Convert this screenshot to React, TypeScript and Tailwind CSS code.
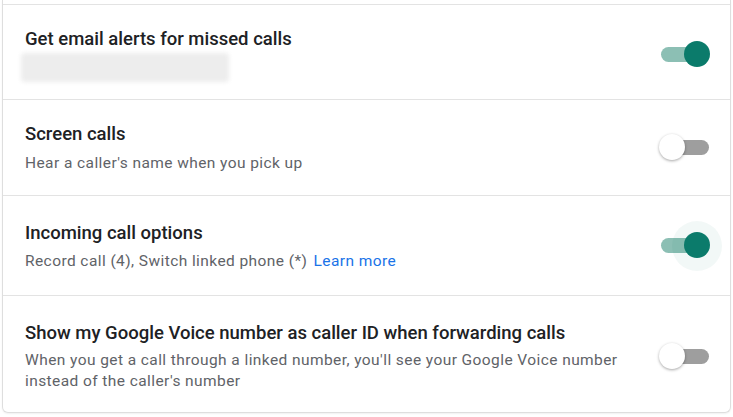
import type { ReactNode } from 'react';

function Toggle({ on, halo }: { on: boolean; halo?: boolean }) {
  return (
    <div className="relative ml-auto h-[15px] w-[48px] shrink-0">
      <div className={`h-full w-full rounded-full ${on ? 'bg-[#8cbfb4]' : 'bg-[#9e9e9e]'}`} />
      {halo && (
        <div className="absolute left-[11px] top-[-17px] h-[50px] w-[50px] rounded-full bg-[#00796b]/[0.05]" />
      )}
      <div
        className={`absolute top-[-6px] h-[26px] w-[26px] rounded-full ${
          on
            ? 'left-[23px] bg-[#0b7b6b]'
            : 'left-[-2px] bg-white shadow-[0_1px_3px_rgba(0,0,0,0.35)]'
        }`}
      />
    </div>
  );
}

function Row({
  title,
  on,
  halo,
  children,
  className,
}: {
  title: string;
  on: boolean;
  halo?: boolean;
  children: ReactNode;
  className: string;
}) {
  return (
    <div className={`flex items-center border-t border-[#e3e3e3] pl-[22px] pr-[21px] ${className}`}>
      <div className="max-w-[615px]">
        <div className="text-[18.5px] font-medium leading-6 text-[#202124]">{title}</div>
        {children}
      </div>
      <Toggle on={on} halo={halo} />
    </div>
  );
}

const sub = 'text-[15.5px] tracking-[0.42px] text-[#5f6368]';

export default function App() {
  return (
    <div className="h-[417px] w-[733px] overflow-hidden bg-white px-[2px] font-['Roboto',sans-serif]">
      <div className="rounded-b-md border-x border-b border-[#dedede] shadow-[0_1px_2px_rgba(0,0,0,0.06)]">
        <div className="h-[4px]" />
        <Row title="Get email alerts for missed calls" on className="h-[95px] pt-[5px]">
          <div className="mt-[2px] h-[29px] w-[208px] -translate-x-[4px] rounded-sm bg-[#ededed] blur-[2px]" />
        </Row>
        <Row title="Screen calls" on={false} className="h-[96px]">
          <div className={`mt-[7px] leading-5 ${sub}`}>Hear a caller's name when you pick up</div>
        </Row>
        <Row title="Incoming call options" on halo className="h-[100px]">
          <div className={`mt-[6px] leading-5 ${sub}`}>
            Record call (4), Switch linked phone (*) <span className="ml-[2px] text-[#1a73e8]">Learn more</span>
          </div>
        </Row>
        <Row title="Show my Google Voice number as caller ID when forwarding calls" on={false} className="h-[117px] pt-[4px]">
          <div className={`mt-[5px] leading-[21px] ${sub}`}>
            When you get a call through a linked number, you'll see your Google Voice number instead of the caller's number
          </div>
        </Row>
      </div>
    </div>
  );
}
